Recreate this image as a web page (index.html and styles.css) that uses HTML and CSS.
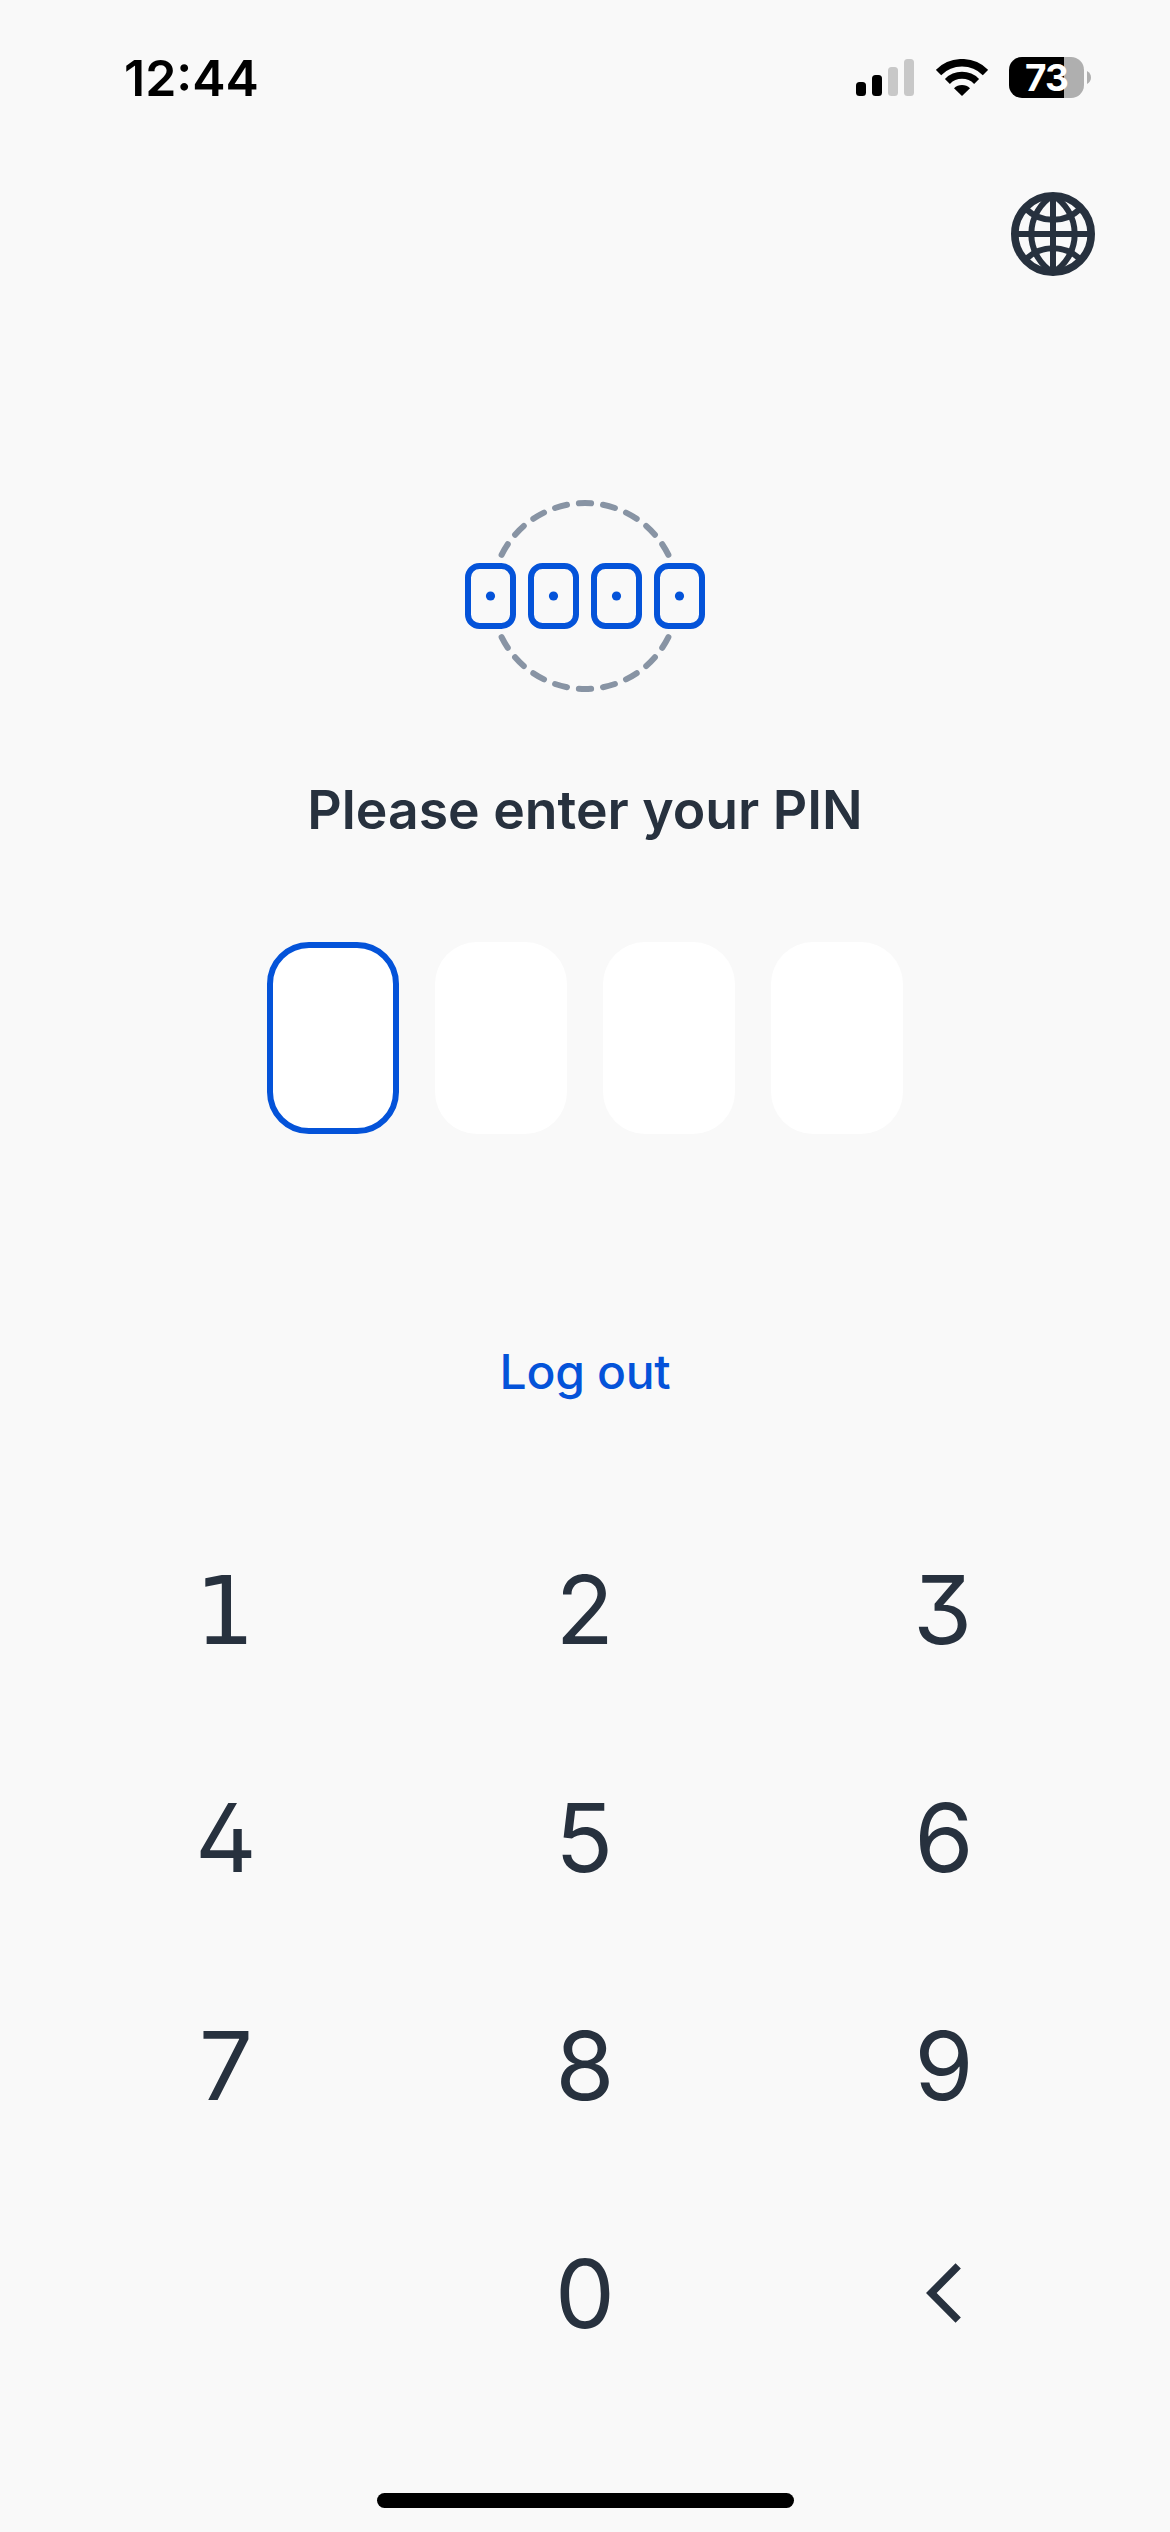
FILE: index.html
```html
<!DOCTYPE html>
<html lang="en">
<head>
  <meta charset="UTF-8" />
  <meta name="viewport" content="width=device-width, initial-scale=1.0"/>
  <title>Enter PIN</title>
  <link rel="stylesheet" href="styles.css">
</head>
<body>

  <div class="screen">
    <div class="status-bar">
      <span class="time">12:44</span>
      <div class="status-icons">
        <svg class="signal" width="58" height="37" viewBox="0 0 58 37">
          <rect x="0" y="23" width="10" height="14" rx="3.5" />
          <rect x="16" y="16" width="10" height="21" rx="3.5" />
          <rect class="off" x="32" y="8" width="10" height="29" rx="3.5" />
          <rect class="off" x="48" y="0" width="10" height="37" rx="3.5" />
        </svg>
        <svg class="wifi" width="52" height="37" viewBox="0 0 52 37">
          <path class="arc" d="M2.5 13.5 A33.2 33.2 0 0 1 49.5 13.5" stroke-width="7.6" />
          <path class="arc" d="M11.4 22.4 A20.7 20.7 0 0 1 40.6 22.4" stroke-width="7" />
          <path d="M26 37 L18 29.2 A11.6 11.6 0 0 1 34 29.2 Z" />
        </svg>
        <div class="battery">
          <div class="battery-body"><span>73</span></div>
          <svg class="battery-tip" width="4" height="13" viewBox="0 0 4 13">
            <path d="M0 0 C5.3 2.5 5.3 10.5 0 13 Z" />
          </svg>
        </div>
      </div>
    </div>

    <div class="top-bar">
      <button class="lang-btn" aria-label="Language">
        <svg width="84" height="84" viewBox="-42 -42 84 84">
          <circle r="38.2" stroke-width="7.6" />
          <path d="M-38 0 H38 M0 -38 V38" />
          <path d="M0 -38.5 A45 45 0 0 0 0 38.5 A45 45 0 0 0 0 -38.5" />
          <path d="M-27 -25 A39 39 0 0 0 27 -25 M-27 25 A39 39 0 0 1 27 25" />
        </svg>
      </button>
    </div>

    <svg class="pin-icon" width="240" height="192" viewBox="0 0 240 192">
      <path class="dash" pathLength="127.6" d="M36.6 54.9 A93 93 0 0 1 203.4 54.9" />
      <path class="dash" pathLength="127.6" d="M36.6 137.1 A93 93 0 0 0 203.4 137.1" />
      <rect x="3" y="66" width="45" height="60" rx="11.5" />
      <rect x="66" y="66" width="45" height="60" rx="11.5" />
      <rect x="129" y="66" width="45" height="60" rx="11.5" />
      <rect x="192" y="66" width="45" height="60" rx="11.5" />
      <circle cx="25.5" cy="96" r="4.6" />
      <circle cx="88.5" cy="96" r="4.6" />
      <circle cx="151.5" cy="96" r="4.6" />
      <circle cx="214.5" cy="96" r="4.6" />
    </svg>

    <h1 class="title">Please enter your PIN</h1>

    <div class="pin-fields">
      <div class="pin-box active"></div>
      <div class="pin-box"></div>
      <div class="pin-box"></div>
      <div class="pin-box"></div>
    </div>

    <button class="logout">Log out</button>

    <div class="keypad">
      <button class="one">1</button>
      <button>2</button>
      <button>3</button>
      <button>4</button>
      <button>5</button>
      <button>6</button>
      <button>7</button>
      <button>8</button>
      <button>9</button>
      <span></span>
      <button>0</button>
      <button class="back" aria-label="Delete">
        <svg width="36" height="60" viewBox="0 0 36 60">
          <path d="M32.2 2.9 L5.3 30 L32.2 57.1" />
        </svg>
      </button>
    </div>

    <div class="home-bar"></div>
  </div>

</body>
</html>
```
FILE: styles.css
```css
* {
  box-sizing: border-box;
}

body {
  margin: 0;
  background: #f9f9f9;
  font-family: Inter, "Liberation Sans", sans-serif;
  color: #27313e;
}

button {
  padding: 0;
  border: none;
  background: none;
  font-family: inherit;
  color: inherit;
  cursor: pointer;
}

svg {
  display: block;
}

.screen {
  width: 1170px;
  height: 2532px;
  display: flex;
  flex-direction: column;
  align-items: center;
  overflow: hidden;
}

/* status bar */
.status-bar {
  width: 100%;
  height: 156px;
  padding: 48px 79px 0 124px;
  display: flex;
  justify-content: space-between;
  align-items: flex-start;
  color: #000;
}

.time {
  font-size: 50px;
  font-weight: 600;
  line-height: 60px;
}

.status-icons {
  display: flex;
  align-items: center;
  height: 59px;
}

.signal .off {
  fill: #c8c8c8;
}

.wifi {
  margin: 0 21px 0 22px;
}

.wifi .arc {
  fill: none;
  stroke: #000;
}

.battery {
  display: flex;
  align-items: center;
  gap: 3px;
}

.battery-body {
  width: 75px;
  height: 41px;
  border-radius: 13px;
  background: linear-gradient(to right, #000 55px, #afafaf 55px);
  color: #fff;
  font-size: 37px;
  font-weight: 700;
  line-height: 41px;
  letter-spacing: -0.8px;
  text-align: center;
}

.battery-tip {
  fill: #afafaf;
}

/* language button */
.top-bar {
  width: 100%;
  height: 344px;
  padding: 36px 75px 0 0;
  display: flex;
  justify-content: flex-end;
  align-items: flex-start;
}

.lang-btn svg {
  fill: none;
  stroke: #27313e;
  stroke-width: 6;
}

/* pin */
.pin-icon {
  fill: none;
  stroke: #0453d9;
  stroke-width: 6;
}

.pin-icon circle {
  fill: #0453d9;
  stroke: none;
}

.pin-icon .dash {
  stroke: #8894a4;
  stroke-linecap: round;
  stroke-dasharray: 7.6 7.4;
}

.title {
  margin: 82px 0 0;
  font-size: 53.5px;
  font-weight: 600;
  line-height: 72px;
  white-space: nowrap;
}

.pin-fields {
  margin-top: 96px;
  display: flex;
  gap: 36px;
}

.pin-box {
  width: 132px;
  height: 192px;
  border-radius: 42px;
  background: #fff;
}

.pin-box.active {
  border: 6px solid #0453d9;
}

.logout {
  margin-top: 206px;
  height: 64px;
  font-size: 48px;
  font-weight: 500;
  line-height: 64px;
  letter-spacing: -0.3px;
  color: #0453d9;
}

/* keypad */
.keypad {
  margin-top: 91px;
  display: grid;
  grid-template-columns: repeat(3, 359px);
  grid-auto-rows: 228px;
}

.keypad button {
  display: flex;
  justify-content: center;
  align-items: center;
  font-size: 95.5px;
  font-weight: 400;
  font-feature-settings: "cv09", "cv02", "tnum";
}

/* slab-footed 1 */
.keypad .one {
  padding: 4px 2px 0 0;
  font-family: "DejaVu Sans", sans-serif;
  font-size: 94px;
}

.back svg {
  fill: none;
  stroke: #27313e;
  stroke-width: 7.5;
}

.home-bar {
  margin-top: 86px;
  width: 417px;
  height: 15px;
  border-radius: 8px;
  background: #000;
}
```
